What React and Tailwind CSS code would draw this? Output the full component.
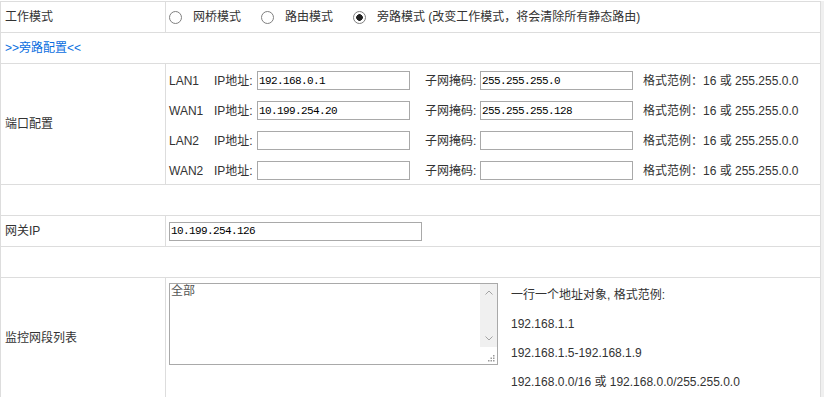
import { useState } from 'react';

const ports = [
  { name: 'LAN1', ip: '192.168.0.1', mask: '255.255.255.0' },
  { name: 'WAN1', ip: '10.199.254.20', mask: '255.255.255.128' },
  { name: 'LAN2', ip: '', mask: '' },
  { name: 'WAN2', ip: '', mask: '' },
];

const sans = "font-['Liberation_Sans','Noto_Sans_CJK_SC',sans-serif]";
const inputCls =
  "h-[19px] border border-[#a9a9a9] bg-white px-[1px] text-[11px] tracking-[-0.6px] text-black outline-none font-['Liberation_Mono','Noto_Sans_CJK_SC',monospace]";

function Radio({ checked, onChange, label }) {
  return (
    <label className="flex items-center mr-[20px]">
      <input
        type="radio"
        name="mode"
        checked={checked}
        onChange={onChange}
        className="appearance-none w-[13px] h-[13px] rounded-full border border-[#808080] bg-white checked:bg-[radial-gradient(circle,#222_3px,#fff_3.6px)]"
      />
      <span className="ml-[11px]">{label}</span>
    </label>
  );
}

export default function App() {
  const [mode, setMode] = useState('bypass');
  const [gateway, setGateway] = useState('10.199.254.126');

  return (
    <div className={`flex pt-px bg-white text-[12px] text-[#333] ${sans}`}>
      <div className="w-[821px] border-t border-l border-r border-[#dddddd]">
        {/* 工作模式 */}
        <div className="flex h-[31px] border-b border-[#dddddd]">
          <div className="w-[165px] border-r border-[#dddddd] pl-1 flex items-center">工作模式</div>
          <div className="flex-1 pl-[3px] flex items-center">
            <Radio checked={mode === 'bridge'} onChange={() => setMode('bridge')} label="网桥模式" />
            <Radio checked={mode === 'route'} onChange={() => setMode('route')} label="路由模式" />
            <Radio
              checked={mode === 'bypass'}
              onChange={() => setMode('bypass')}
              label="旁路模式 (改变工作模式，将会清除所有静态路由)"
            />
          </div>
        </div>

        {/* 旁路配置 */}
        <div className="flex h-[31px] border-b border-[#dddddd] items-center pl-1">
          <a href="#" className="text-[#0a6ee0]">&gt;&gt;旁路配置&lt;&lt;</a>
        </div>

        {/* 端口配置 */}
        <div className="flex h-[121px] border-b border-[#dddddd]">
          <div className="w-[165px] border-r border-[#dddddd] pl-1 flex items-center">端口配置</div>
          <div className="flex-1 pl-[3px] pt-[7px] flex flex-col gap-[11px]">
            {ports.map(p => (
              <div key={p.name} className="flex items-center h-[19px]">
                <span className="w-[45px]">{p.name}</span>
                <span className="w-[43px]">IP地址:</span>
                <input defaultValue={p.ip} className={`${inputCls} w-[153px]`} />
                <span className="ml-[15px] w-[55px]">子网掩码:</span>
                <input defaultValue={p.mask} className={`${inputCls} w-[153px]`} />
                <span className="ml-[10px]">格式范例：16 或 255.255.0.0</span>
              </div>
            ))}
          </div>
        </div>

        <div className="h-[31px] border-b border-[#dddddd]"></div>

        {/* 网关IP */}
        <div className="flex h-[31px] border-b border-[#dddddd]">
          <div className="w-[165px] border-r border-[#dddddd] pl-1 flex items-center">网关IP</div>
          <div className="flex-1 pl-[3px] flex items-center">
            <input
              value={gateway}
              onChange={e => setGateway(e.target.value)}
              className={`${inputCls} w-[253px]`}
            />
          </div>
        </div>

        <div className="h-[31px] border-b border-[#dddddd]"></div>

        {/* 监控网段列表 */}
        <div className="flex">
          <div className="w-[165px] border-r border-[#dddddd] pl-1 flex items-center">监控网段列表</div>
          <div className="flex-1 pl-[3px] flex">
            <div className="pt-[5px]">
              <div className="relative w-[329px] h-[82px]">
                <textarea
                  defaultValue="全部"
                  className="w-full h-full resize-none overflow-hidden border border-[#a9a9a9] pl-px pr-[18px] text-[12px] leading-[14px] text-[#555] outline-none"
                />
                {/* scrollbar */}
                <div className="absolute right-px top-px w-[17px] h-[63px] bg-[#f0f0f0] flex flex-col items-center justify-between py-[6px]">
                  <svg width="8" height="5" viewBox="0 0 8 5">
                    <path d="M0.5 4.5 L4 1 L7.5 4.5" fill="none" stroke="#a3a3a3" strokeWidth="1" />
                  </svg>
                  <svg width="8" height="5" viewBox="0 0 8 5">
                    <path d="M0.5 0.5 L4 4 L7.5 0.5" fill="none" stroke="#a3a3a3" strokeWidth="1" />
                  </svg>
                </div>
                <svg className="absolute right-[3px] bottom-[3px]" width="7" height="7" viewBox="0 0 7 7">
                  <rect x="5" y="0" width="1.5" height="1.5" fill="#999" />
                  <rect x="2.5" y="2.5" width="1.5" height="1.5" fill="#999" />
                  <rect x="5" y="2.5" width="1.5" height="1.5" fill="#999" />
                  <rect x="0" y="5" width="1.5" height="1.5" fill="#999" />
                  <rect x="2.5" y="5" width="1.5" height="1.5" fill="#999" />
                  <rect x="5" y="5" width="1.5" height="1.5" fill="#999" />
                </svg>
              </div>
            </div>
            <div className="ml-[13px] pt-[3px] leading-[29px]">
              <div>一行一个地址对象, 格式范例:</div>
              <div>192.168.1.1</div>
              <div>192.168.1.5-192.168.1.9</div>
              <div>192.168.0.0/16 或 192.168.0.0/255.255.0.0</div>
            </div>
          </div>
        </div>
      </div>
      <div className="flex-1 bg-[#f0f0f0]"></div>
    </div>
  );
}
